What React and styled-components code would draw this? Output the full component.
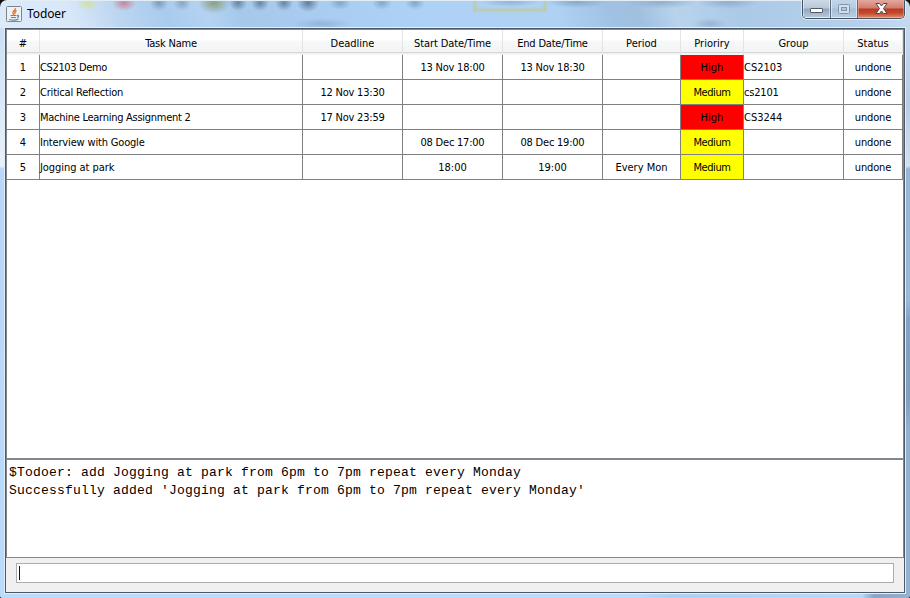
import React from "react";
import styled, { createGlobalStyle, css } from "styled-components";

const Global = createGlobalStyle`
  * { box-sizing: border-box; }
  body { margin: 0; overflow: hidden; background: #111; }
`;

const ui = '"DejaVu Sans Condensed", "DejaVu Sans", sans-serif';

const Window = styled.div`
  width: 910px;
  height: 598px;
  display: grid;
  grid-template-rows: 27px 567px 4px;
  border-radius: 7px 7px 2px 2px;
  overflow: hidden;
  background:
    linear-gradient(#e3edf5, #e3edf5) 0 0 / 100% 1px no-repeat,
    radial-gradient(ellipse 11px 8px at 88px 3px, #d3e0a0, #d3e0a000) no-repeat,
    radial-gradient(ellipse 12px 8px at 124px 3px, #c9849c, #c9849c00) no-repeat,
    radial-gradient(ellipse 9px 8px at 159px 3px, #7f9cb8, #7f9cb800) no-repeat,
    radial-gradient(ellipse 9px 8px at 182px 3px, #8aa6c0, #8aa6c000) no-repeat,
    radial-gradient(ellipse 16px 11px at 214px 3px, #8c9f80, #8c9f8000) no-repeat,
    radial-gradient(ellipse 9px 8px at 238px 3px, #6685a2, #6685a200) no-repeat,
    radial-gradient(ellipse 9px 8px at 260px 3px, #6685a2, #6685a200) no-repeat,
    radial-gradient(ellipse 9px 8px at 284px 3px, #6685a2, #6685a200) no-repeat,
    radial-gradient(ellipse 11px 9px at 308px 3px, #5f7e9c, #5f7e9c00) no-repeat,
    radial-gradient(ellipse 11px 7px at 340px 3px, #84a6c8, #84a6c800) no-repeat,
    radial-gradient(ellipse 10px 7px at 382px 3px, #84a6c8, #84a6c800) no-repeat,
    radial-gradient(ellipse 10px 7px at 415px 3px, #84a6c8, #84a6c800) no-repeat,
    linear-gradient(90deg, #b9cda800, #b9cda8 50%, #b9cda800) 472px 1px / 6px 11px no-repeat,
    linear-gradient(90deg, #b9cda800, #b9cda8 50%, #b9cda800) 542px 1px / 6px 11px no-repeat,
    linear-gradient(#b9cda800, #b9cda8 50%, #b9cda800) 474px 7px / 72px 6px no-repeat,
    radial-gradient(ellipse 30px 5px at 510px 2px, #93b4d6, #93b4d600) no-repeat,
    radial-gradient(ellipse 30px 6px at 322px 24px, #93b5d8, #93b5d800) no-repeat,
    radial-gradient(ellipse 30px 6px at 577px 2px, #89a9c9, #89a9c900) no-repeat,
    radial-gradient(ellipse 36px 7px at 660px 2px, #91afcd, #91afcd00) no-repeat,
    radial-gradient(ellipse 30px 7px at 728px 2px, #91afcd, #91afcd00) no-repeat,
    radial-gradient(ellipse 18px 6px at 710px 24px, #98b4d0, #98b4d000) no-repeat,
    linear-gradient(70deg, #dceafa 0, #d9e8f8 70px, #bcd6f0 115px, #a9cbed 160px, #b4d3f2 200px, #a5c8eb 230px, #aed2f6 400px, #aed1f4 530px, #a0c1e2 580px, #a0c0e0 605px, #b8d3ec 640px, #abcae8 700px, #b4cfea 800px, #c5dbf0 100%) 0 0 / 100% 28px no-repeat,
    linear-gradient(#c9dff5 28px, #e8f1fb 166px, #b5d8fb 169px, #b9dbfc 100%) 0 0 / 6px 100% no-repeat,
    linear-gradient(#c5d9ee 28px, #b5cce4 100px, #d2e0ef 166px, #97b6d7 169px, #9ab8d8 300px, #84a2c5 320px, #829fc0 400px, #94b1d0 430px, #94b1d0 100%) 100% 0 / 6px 100% no-repeat,
    linear-gradient(90deg, #b9dbfc 0, #b9dbfc 640px, #acd0f3 670px, #b6d8fa 830px, #b6d8fa 862px, #8aa6c6 874px, #94b1d0 100%);
`;

const TitleBar = styled.header`
  display: flex;
  justify-content: space-between;
  align-items: flex-start;
  padding: 0 5px 0 6px;
`;

const Caption = styled.div`
  display: flex;
  align-items: center;
  gap: 5px;
  padding-top: 6px;
  font: 12px/16px "Noto Sans", sans-serif;
  letter-spacing: -0.1px;
  color: #000;
`;

const Controls = styled.div`
  display: flex;
  height: 19px;
  border: 1px solid #46535f;
  border-top: 0;
  border-radius: 0 0 5px 5px;
  overflow: hidden;
  box-shadow: 0 0 0 1px #ffffff90;
`;

const Control = styled.div`
  width: ${(p) => p.$w}px;
  height: 18px;
  display: grid;
  place-items: center;
  padding-top: ${(p) => p.$drop || 0}px;
  border: 1px solid #ffffff80;
  border-top: 0;
  background: linear-gradient(#ccd9e6 0, #b9c8d8 8px, #93a7bc 9px, #b3c7dc 100%);
  & + & { box-shadow: -1px 0 0 #5f6d7b; margin-left: 1px; }
  ${(p) => p.$muted && css`background: linear-gradient(#c2d5e8 0, #b5cbe1 8px, #a6bfd8 9px, #b5cde4 100%);`}
  ${(p) => p.$close && css`
    border-color: #f0b0a080;
    background: linear-gradient(#e3a99e 0, #d27c6c 8px, #b93a22 9px, #c4472c 13px, #da8062 100%);
  `}
`;

const Client = styled.main`
  display: grid;
  grid-template-rows: 430px 99px 34px;
  width: 902px;
  height: 567px;
  margin-left: 4px;
  border: 1px solid #e4eef8;
  outline: 1px solid #4d5966;
  outline-offset: -2px;
  padding: 1px;
  background: #f0f0f0;
`;

const TablePane = styled.section`
  border: 1px solid #828790;
  background: #fff;
  overflow: hidden;
`;

const Grid = styled.div`
  display: grid;
  grid-template-columns: 33px 263px 100px 100px 100px 78px 63px 100px 59px;
  font: 11px/26px ${ui};
  color: #000;
`;

const HeadCell = styled.div`
  height: 25px;
  line-height: 28px;
  text-align: center;
  white-space: nowrap;
  background:
    linear-gradient(#f6f6f6, #f6f6f6) 0 100% / 100% 1px no-repeat,
    linear-gradient(#d5d5d5, #d5d5d5) 0 calc(100% - 2px) / 100% 1px no-repeat,
    linear-gradient(#fff 0, #fff 10px, #f7f8fa 11px, #f1f2f4 100%);
  border-right: 1px solid #e2e3e5;
`;

const Cell = styled.div`
  height: 25px;
  white-space: nowrap;
  text-align: ${(p) => (p.$left ? "left" : "center")};
  border-right: 1px solid #808080;
  border-bottom: 1px solid #808080;
  background: ${(p) => p.$fill || "#fff"};
`;

const Label = styled.span`
  letter-spacing: ${(p) => p.$track}px;
`;

const Console = styled.pre`
  margin: 0;
  padding: 4px 2px;
  border: 1px solid #828790;
  background: #fff;
  font: 13px/18px "Liberation Mono", monospace;
  letter-spacing: 0.199px;
  color: #000;
`;

const CommandBar = styled.footer`
  padding: 5px 10px 9px;
  background: #f0f0f0;
`;

const CommandInput = styled.div`
  height: 20px;
  padding: 2px;
  border: 1px solid #abadb3;
  background: #fff;
`;

const Caret = styled.div`
  width: 1px;
  height: 14px;
  background: #0000a8;
`;

const columns = ["#", "Task Name", "Deadline", "Start Date/Time", "End Date/Time", "Period", "Prioriry", "Group", "Status"];
const tasks = [
  ["1", "CS2103 Demo", "", "13 Nov 18:00", "13 Nov 18:30", "", "High", "CS2103", "undone"],
  ["2", "Critical Reflection", "12 Nov 13:30", "", "", "", "Medium", "cs2101", "undone"],
  ["3", "Machine Learning Assignment 2", "17 Nov 23:59", "", "", "", "High", "CS3244", "undone"],
  ["4", "Interview with Google", "", "08 Dec 17:00", "08 Dec 19:00", "", "Medium", "", "undone"],
  ["5", "Jogging at park", "", "18:00", "19:00", "Every Mon", "Medium", "", "undone"],
];
const priorityFill = { High: "#ff0000", Medium: "#ffff00" };

/* Letter spacing for the labels that need tightening. */
const tracking = {
  "Task Name": -0.2,
  "Start Date/Time": -0.1,
  "End Date/Time": -0.2,
  "CS2103 Demo": -0.36,
  "Critical Reflection": -0.2,
  "Machine Learning Assignment 2": -0.27,
  "Interview with Google": -0.17,
  "Jogging at park": -0.05,
  Medium: -0.4,
  cs2101: -0.2,
  undone: -0.15,
};
const trackOf = (text) => tracking[text] ?? (/^\d+ /.test(text) ? -0.22 : 0);

function JavaIcon() {
  return (
    <svg width="16" height="16" viewBox="0 0 16 16">
      <rect x="0.5" y="0.5" width="15" height="15" rx="1" fill="#eef1f4" stroke="#7c858e" />
      <path d="M9.500 2C10 4 6 5 7 7l1 2M10.500 4.500C8.500 5.500 8.500 6.500 9 8" fill="none" stroke="#e8792b" strokeWidth="1.400" />
      <path d="M4.500 9.500h6M5 11.500h5M3 13.500c3 .8 7 .8 9.500-.4M11 9.300c2.500-.3 2 1.700 0 2.200" fill="none" stroke="#5c87a5" strokeWidth="1.200" />
    </svg>
  );
}

export default function App() {
  return (
    <>
      <Global />
      <Window>
        <TitleBar>
          <Caption><JavaIcon />Todoer</Caption>
          <Controls>
            <Control $w={27} $drop={5}>
              <svg width="13" height="6"><rect x="0.5" y="0.5" width="12" height="4" rx="0.5" fill="#fff" stroke="#535b66" /></svg>
            </Control>
            <Control $w={26} $muted>
              <svg width="12" height="10"><rect x="0.5" y="0.5" width="11" height="9" rx="1" fill="#d4dfea" stroke="#8394a8" /><rect x="3.5" y="3.5" width="5" height="3" fill="#b4c7da" stroke="#8394a8" /></svg>
            </Control>
            <Control $w={46} $close>
              <svg width="13" height="11" viewBox="0 0 13 11"><path d="M1 .5h3.500l2 2.500 2-2.500H12L8.500 5.500 12 10.500H8.500l-2-2.500-2 2.500H1l3.500-5z" fill="#fff" stroke="#53434a" /></svg>
            </Control>
          </Controls>
        </TitleBar>
        <Client>
          <TablePane>
            <Grid>
              {columns.map((c) => <HeadCell key={c}><Label $track={trackOf(c)}>{c}</Label></HeadCell>)}
              {tasks.map((row) => row.map((v, i) => (
                <Cell key={row[0] + i} $left={i === 1 || i === 7} $fill={i === 6 ? priorityFill[v] : undefined}>
                  <Label $track={trackOf(v)}>{v}</Label>
                </Cell>
              )))}
            </Grid>
          </TablePane>
          <Console>{"$Todoer: add Jogging at park from 6pm to 7pm repeat every Monday\nSuccessfully added 'Jogging at park from 6pm to 7pm repeat every Monday'"}</Console>
          <CommandBar><CommandInput><Caret /></CommandInput></CommandBar>
        </Client>
      </Window>
    </>
  );
}
